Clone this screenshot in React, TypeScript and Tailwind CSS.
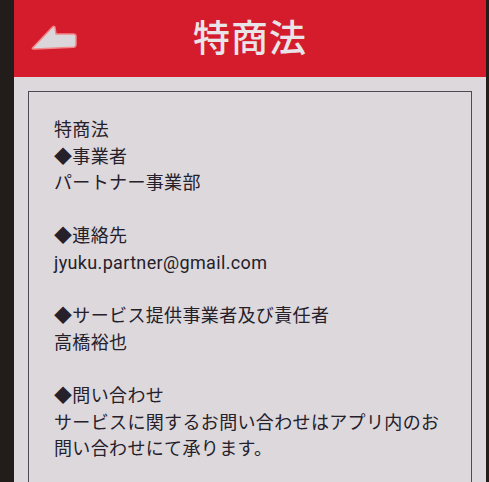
const lines: string[] = [
  "特商法",
  "◆事業者",
  "パートナー事業部",
  "",
  "◆連絡先",
  "jyuku.partner@gmail.com",
  "",
  "◆サービス提供事業者及び責任者",
  "高橋裕也",
  "",
  "◆問い合わせ",
  "サービスに関するお問い合わせはアプリ内のお",
  "問い合わせにて承ります。",
];

function BackIcon() {
  return (
    <svg width="48" height="28" viewBox="0 0 48 28" className="block">
      <path
        d="M2.5 24 L22.5 3 Q24.5 1.5 25 3.5 L26 10 L43.5 10 Q46 10 46 12.5 L46 20.5 Q46 23 43.5 23.2 L5 25 Q1.5 25.2 2.5 24 Z"
        fill="#dad6da"
        stroke="#f2868a"
        strokeWidth="1.5"
        strokeLinejoin="round"
      />
    </svg>
  );
}

export default function App() {
  return (
    <div className="flex h-[482px] w-[489px] overflow-hidden bg-[#221c1a]">
      <div className="ml-[14px] flex h-full w-[472px] flex-col bg-[#dcd8dc]">
        <header className="relative flex h-[77px] shrink-0 items-center justify-center bg-[#d41c2c] pb-[3px]">
          <div className="absolute left-[16px] top-[24px]">
            <BackIcon />
          </div>
          <h1
            className="text-[37px] font-medium tracking-[1px] text-[#e9e4e8]"
            style={{ fontFamily: '"Noto Sans CJK JP", sans-serif' }}
          >
            特商法
          </h1>
        </header>

        <div className="flex-1 px-[14px] pt-[14px]">
          <div
            className="h-full border-[1.5px] border-b-0 border-[#4e4858] pl-[25px] pt-[25px] text-[18px] leading-[26.6px] tracking-[0.35px] text-[#25202a]"
            style={{ fontFamily: 'Roboto, "Noto Sans CJK JP", sans-serif' }}
          >
            {lines.map((line, i) => (
              <p key={i} className="h-[26.6px] whitespace-nowrap">
                {line}
              </p>
            ))}
          </div>
        </div>
      </div>
    </div>
  );
}
